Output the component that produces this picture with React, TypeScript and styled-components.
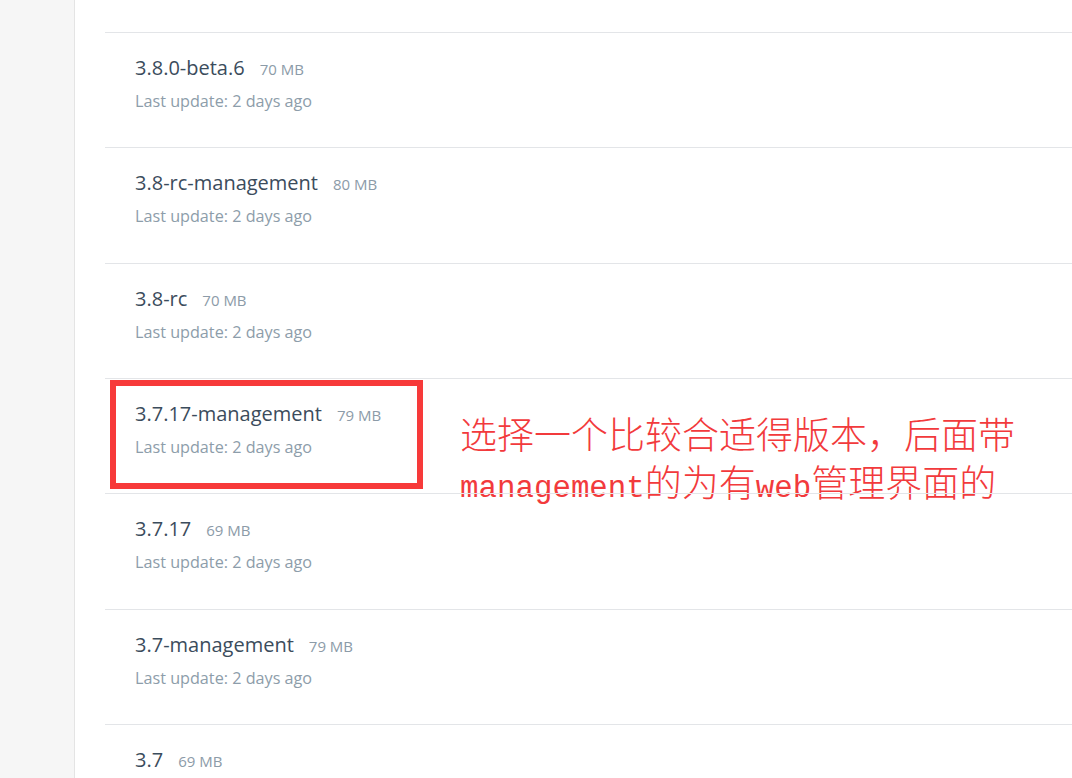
import styled, { createGlobalStyle } from 'styled-components';

const versions = [
  { id: 1, name: '3.8.0-beta.6', size: '70 MB' },
  { id: 2, name: '3.8-rc-management', size: '80 MB' },
  { id: 3, name: '3.8-rc', size: '70 MB' },
  { id: 4, name: '3.7.17-management', size: '79 MB', marked: true },
  { id: 5, name: '3.7.17', size: '69 MB' },
  { id: 6, name: '3.7-management', size: '79 MB' },
  { id: 7, name: '3.7', size: '69 MB' },
];

const GlobalStyle = createGlobalStyle`
  html, body {
    margin: 0;
    padding: 0;
    background: #fff;
    overflow: hidden;
  }
  body {
    font-family: "Open Sans", "Noto Sans", sans-serif;
  }
`;

const App = () => {
  return (
    <>
      <GlobalStyle />
      <Wrapper>
        <Sidebar />
        <Main>
          <List>
            {versions.map((v) => (
              <Row key={v.id}>
                <TitleLine>
                  <Name>{v.name}</Name>
                  <Size>{v.size}</Size>
                </TitleLine>
                <Updated>Last update: 2 days ago</Updated>
                {v.marked && (
                  <>
                    <Highlight />
                    <Note>
                      选择一个比较合适得版本，后面带
                      <br />
                      <Latin>management</Latin>的为有<Latin>web</Latin>管理界面的
                    </Note>
                  </>
                )}
              </Row>
            ))}
          </List>
        </Main>
      </Wrapper>
    </>
  );
};

const Wrapper = styled.div`
  display: flex;
  width: 1072px;
  height: 778px;
  overflow: hidden;
`;

const Sidebar = styled.aside`
  width: 74px;
  flex-shrink: 0;
  background: #f6f6f6;
  border-right: 1px solid #e4e4e4;
`;

const Main = styled.main`
  flex: 1;
  padding: 32px 0 0 30px;
`;

const List = styled.div`
  display: flex;
  flex-direction: column;
`;

const Row = styled.article`
  position: relative;
  box-sizing: border-box;
  height: 115.33px;
  flex-shrink: 0;
  border-top: 1px solid #e3e5e8;
  padding: 23px 0 0 30px;
`;

const TitleLine = styled.div`
  display: flex;
  align-items: baseline;
  gap: 15px;
  height: 24px;
  line-height: 24px;
`;

const Name = styled.span`
  font-size: 20px;
  color: #3b4c5c;
`;

const Size = styled.span`
  font-size: 15px;
  color: #8c9ba8;
`;

const Updated = styled.div`
  margin-top: 9px;
  font-size: 16.2px;
  line-height: 24px;
  color: #8d9daa;
`;

const Highlight = styled.div`
  position: absolute;
  left: 5px;
  top: 1px;
  width: 313px;
  height: 109px;
  box-sizing: border-box;
  border: 6px solid #f73a3a;
`;

const Note = styled.div`
  position: absolute;
  left: 355px;
  top: 30px;
  font-family: "Noto Sans CJK SC", sans-serif;
  font-weight: 300;
  font-size: 37px;
  line-height: 48px;
  color: #f23a3c;
  white-space: nowrap;
`;

const Latin = styled.span`
  font-family: "Liberation Mono", monospace;
  font-size: 30.8px;
`;

export default App;
